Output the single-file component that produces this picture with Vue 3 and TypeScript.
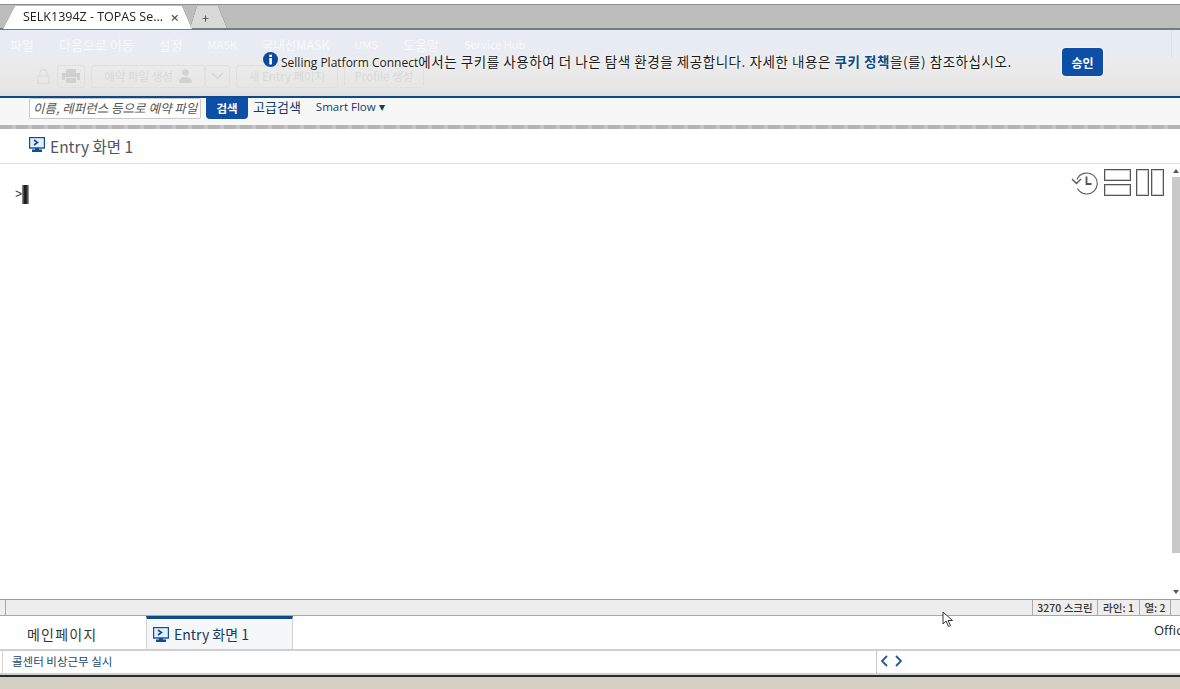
<script setup lang="ts">
interface MenuItem { label: string; kind: string }
const menus: MenuItem[] = [
  { label: '파일', kind: 'ko' },
  { label: '다음으로 이동', kind: 'ko' },
  { label: '설정', kind: 'ko' },
  { label: 'MASK', kind: 'latin' },
  { label: '국내선MASK', kind: 'mixed' },
  { label: 'UMS', kind: 'latin' },
  { label: '도움말', kind: 'ko' },
  { label: 'Service Hub', kind: 'latin' },
]
</script>

<template>
  <div class="page">
    <div class="tabstrip">
      <div class="browser-tabs">
        <div class="browser-tab">
          <span class="browser-title">SELK1394Z - TOPAS Se...</span>
          <span class="browser-close">×</span>
        </div>
        <div class="browser-new">+</div>
      </div>
    </div>

    <div class="header">
      <nav class="menu">
        <span v-for="m in menus" :key="m.label" :class="m.kind">{{ m.label }}</span>
        <span class="menu-end"></span>
      </nav>
      <div class="toolbar">
        <svg class="tool-lock" width="13" height="15" viewBox="0 0 13 15">
          <path d="M3 7V4a3.500 3.500 0 0 1 7 0v3" fill="none" stroke="#dcdcdc" stroke-width="1.300" />
          <rect x="1" y="7" width="11" height="7.500" fill="none" stroke="#dcdcdc" stroke-width="1.300" />
        </svg>
        <span class="tool-box tool-print">
          <svg width="18" height="14" viewBox="0 0 18 14">
            <path d="M4 0h10v4H4zM0 4h18v7h-3V8H3v3H0zM4 9h10v5H4z" fill="#d0d0d0" />
          </svg>
        </span>
        <span class="tool-box tool-pnr">예약 파일 생성
          <svg width="13" height="14" viewBox="0 0 13 14"><circle cx="6.500" cy="3.500" r="3.200" fill="#d2d2d2" /><path d="M0 14c0-5 3-6 6.500-6s6.500 1 6.500 6z" fill="#d2d2d2" /></svg>
        </span>
        <span class="tool-box tool-arrow">
          <svg width="13" height="8" viewBox="0 0 13 8"><path d="M1 1l5.500 5.500L12 1" fill="none" stroke="#d6d6d6" stroke-width="1.500" /></svg>
        </span>
        <span class="tool-box tool-entry">새 Entry 페이지</span>
        <span class="tool-box tool-profile">Profile 생성</span>
      </div>
      <div class="cookie">
        <svg class="cookie-icon" width="15" height="15" viewBox="0 0 15 15">
          <circle cx="7.500" cy="7.500" r="7.500" fill="#0a4a9c" />
          <rect x="6.300" y="6" width="2.600" height="6.500" fill="#fff" />
          <rect x="6.300" y="2.600" width="2.600" height="2.400" fill="#fff" />
        </svg>
        <span class="cookie-text"><span class="cookie-brand">Selling Platform Connect</span>에서는 쿠키를 사용하여 더 나은 탐색 환경을 제공합니다. 자세한 내용은 <b class="cookie-link">쿠키 정책</b>을(를) 참조하십시오.</span>
        <button class="approve" type="button">승인</button>
      </div>
    </div>

    <div class="search">
      <div class="search-input">이름, 레퍼런스 등으로 예약 파일</div>
      <button class="search-btn" type="button">검색</button>
      <span class="advanced">고급검색</span>
      <span class="smart">Smart Flow ▾</span>
    </div>
    <div class="divider"></div>

    <div class="entry-head">
      <svg width="16" height="15" viewBox="0 0 16 15">
        <rect x="0.500" y="0.500" width="15" height="10.500" fill="#e4eef8" stroke="#0f4f98" stroke-width="1.400" />
        <path d="M5 3l3.500 2.500L5 8" fill="none" stroke="#0f4f98" stroke-width="1.600" />
        <path d="M6 11h4v1.500h3V15H3v-2.500h3z" fill="#0f4f98" />
      </svg>
      <span class="entry-title">Entry 화면 1</span>
    </div>

    <div class="terminal">
      <div class="screen">
        <div class="prompt"><span>&gt;</span><i class="cursor"></i></div>
        <div class="screen-tools">
          <svg width="28" height="26" viewBox="0 0 28 26" fill="none" stroke="#555" stroke-width="1.100">
            <path d="M6 9.500A10.500 10.500 0 1 1 6.500 18.500" />
            <path d="M1 9l4.500 4.500L10 9" stroke-width="1.400" />
            <path d="M15.500 6.500V14h5" stroke-width="1.800" />
          </svg>
          <svg width="27" height="27" viewBox="0 0 27 27" fill="none">
            <rect x="0.500" y="0.500" width="26" height="11" stroke="#555" />
            <rect x="1.500" y="1.500" width="24" height="9" stroke="#ccc" />
            <rect x="0.500" y="15.500" width="26" height="11" stroke="#555" />
            <rect x="1.500" y="16.500" width="24" height="9" stroke="#ccc" />
          </svg>
          <svg width="28" height="27" viewBox="0 0 28 27" fill="none">
            <rect x="0.500" y="0.500" width="12" height="26" stroke="#555" />
            <rect x="1.500" y="1.500" width="10" height="24" stroke="#ccc" />
            <rect x="15.500" y="0.500" width="12" height="26" stroke="#555" />
            <rect x="16.500" y="1.500" width="10" height="24" stroke="#ccc" />
          </svg>
        </div>
      </div>
      <div class="scrollbar">
        <span class="scroll-up"></span>
        <span class="scroll-thumb"></span>
        <span class="scroll-down"></span>
      </div>
    </div>

    <div class="status">
      <span class="status-grip"></span>
      <span class="status-fill"></span>
      <span class="status-cell cell-screen">3270 스크린</span>
      <span class="status-cell cell-line">라인: 1</span>
      <span class="status-cell cell-col">열: 2</span>
      <span class="status-end"></span>
      <svg class="pointer" width="12" height="17" viewBox="0 0 12 17">
        <path d="M1 1v12l3-3 2.500 5.500 2-1L6 9.500h4.500z" fill="#fff" stroke="#333" stroke-width="1" />
      </svg>
    </div>

    <div class="bottom-tabs">
      <div class="main-tab">메인페이지</div>
      <div class="entry-tab">
        <svg width="16" height="15" viewBox="0 0 16 15">
          <rect x="0.500" y="0.500" width="15" height="10.500" fill="#e4eef8" stroke="#0f4f98" stroke-width="1.400" />
          <path d="M5 3l3.500 2.500L5 8" fill="none" stroke="#0f4f98" stroke-width="1.600" />
          <path d="M6 11h4v1.500h3V15H3v-2.500h3z" fill="#0f4f98" />
        </svg>
        <span>Entry 화면 1</span>
      </div>
      <div class="office">Office</div>
    </div>

    <div class="ticker">
      <div class="ticker-text">콜센터 비상근무 실시</div>
      <div class="ticker-nav">
        <svg width="21" height="12" viewBox="0 0 21 12" fill="none" stroke="#1f5a8c" stroke-width="1.800">
          <path d="M6 1L1 6l5 5" />
          <path d="M15 1l5 5-5 5" />
        </svg>
      </div>
    </div>
    <div class="desk"></div>
  </div>
</template>

<style>
html, body { margin: 0; background: #fff; overflow: hidden; }
</style>

<style scoped>
.page {
  width: 1180px;
  height: 689px;
  display: flex;
  flex-direction: column;
  overflow: hidden;
  position: relative;
  font-family: "Noto Sans CJK KR", "Noto Sans", sans-serif;
  background: #fff;
  color: #222;
}
.tabstrip {
  margin-top: 4px;
  height: 26px;
  flex: none;
  box-sizing: border-box;
  display: flex;
  align-items: flex-end;
  padding-left: 3px;
  background: #bdbdbd;
  border-top: 1px solid #8d8d8d;
  border-bottom: 2px solid #7b7b7b;
}
.browser-tabs {
  display: flex;
  align-items: flex-end;
  filter: drop-shadow(0 0 0.600px #333);
}
.browser-tab {
  width: 189px;
  height: 23px;
  margin-bottom: -1px;
  box-sizing: border-box;
  display: flex;
  align-items: center;
  justify-content: space-between;
  padding: 0 13px 2px 20px;
  background: #fff;
  clip-path: polygon(0 100%, 12px 0, 179px 0, 100% 100%);
  font-family: "Open Sans", sans-serif;
  font-size: 12.500px;
  color: #222;
  white-space: nowrap;
}
.browser-close { font-size: 15px; font-weight: 600; color: #555; }
.browser-new {
  width: 37px;
  height: 22px;
  margin-left: -2px;
  box-sizing: border-box;
  display: flex;
  align-items: center;
  justify-content: center;
  padding-right: 6px;
  background: #d9d9d9;
  clip-path: polygon(0 100%, 7px 0, 28px 0, 100% 100%);
  font-size: 12px;
  color: #444;
}
.header {
  position: relative;
  flex: none;
  height: 68px;
}
.menu {
  height: 28px;
  box-sizing: border-box;
  display: flex;
  align-items: center;
  padding: 0 0 0 10px;
  gap: 25px;
  background: linear-gradient(#e7ebf4, #e9ecf2);
  color: #f7f9fc;
  white-space: nowrap;
}
.ko { font-size: 13px; }
.latin { font-size: 11px; }
.mixed { font-size: 12.500px; }
.menu-end {
  margin-left: auto;
  width: 8px;
  height: 100%;
  border-left: 1px solid #dfe2e8;
}
.toolbar {
  height: 40px;
  box-sizing: border-box;
  display: flex;
  align-items: center;
  padding: 0 0 2px 37px;
  background: linear-gradient(#ececec, #e6e6e6 85%, #dedede);
  border-bottom: 2px solid #0d4a8a;
  font-size: 11.500px;
  line-height: 14px;
  color: #d8d8d8;
  white-space: nowrap;
}
.tool-lock { margin-right: 7px; }
.tool-box {
  height: 23px;
  box-sizing: border-box;
  display: flex;
  align-items: center;
  justify-content: center;
  gap: 6px;
  border: 1px solid #e0e0e0;
  border-radius: 3px;
}
.tool-print { width: 28px; margin-right: 6px; }
.tool-pnr { width: 114px; }
.tool-arrow { width: 25px; margin-right: 6px; }
.tool-entry { width: 102px; margin-right: 6px; }
.tool-profile { width: 80px; }
.cookie {
  position: absolute;
  left: 262px;
  top: 17px;
  display: flex;
  align-items: center;
  height: 30px;
  font-size: 13.500px;
  line-height: 14px;
  letter-spacing: 0.550px;
  color: #1a1a1a;
  white-space: nowrap;
}
.cookie-icon { margin: -5px 3px 0 1px; }
.cookie-text { width: 764px; text-shadow: 0 0 3px #fff; }
.cookie-brand { font-family: "Open Sans", sans-serif; font-size: 12px; letter-spacing: 0; }
.cookie-link { color: #0a4a86; }
.approve {
  width: 41px;
  height: 28px;
  margin-left: 17px;
  padding: 0;
  border: 0;
  border-radius: 4px;
  background: #0d4ea6;
  color: #fff;
  font: 700 12px "Noto Sans CJK KR", sans-serif;
  box-shadow: 0 0 3px #fff;
}
.search {
  height: 27px;
  flex: none;
  box-sizing: border-box;
  display: flex;
  align-items: flex-start;
  padding: 0 0 0 29px;
  background: #f7f7f7;
  white-space: nowrap;
}
.search-input {
  width: 172px;
  height: 21px;
  box-sizing: border-box;
  overflow: hidden;
  padding: 0 0 0 3px;
  background: #fff;
  border: 1px solid #c9c9c9;
  border-radius: 2px;
  font-size: 12.500px;
  font-style: italic;
  line-height: 18px;
  color: #555;
}
.search-btn {
  width: 42px;
  height: 22px;
  margin: -1px 0 0 5px;
  padding: 0;
  border: 0;
  border-radius: 0 0 4px 4px;
  background: #0d4ea6;
  color: #fff;
  font: 700 11.500px "Noto Sans CJK KR", sans-serif;
}
.advanced { margin-left: 5px; font-size: 13px; line-height: 18px; color: #123c68; }
.smart { margin-left: 15px; font-family: "Open Sans", sans-serif; font-size: 11.500px; line-height: 18px; color: #123c68; }
.divider {
  height: 4px;
  flex: none;
  background: repeating-linear-gradient(90deg, #b4b4b4 0 12px, #c6c6c6 12px 16px);
}
.entry-head {
  height: 35px;
  flex: none;
  box-sizing: border-box;
  display: flex;
  align-items: center;
  gap: 5px;
  padding: 0 0 0 29px;
  border-bottom: 1px solid #dedede;
}
.entry-head svg { margin-top: -4px; }
.entry-title { font-size: 15.500px; color: #4e5560; }
.terminal {
  flex: 1;
  display: flex;
  min-height: 0;
}
.screen {
  position: relative;
  flex: 1;
}
.prompt {
  display: flex;
  align-items: center;
  padding: 21px 0 0 15px;
  font-family: "Liberation Mono", monospace;
  font-size: 12px;
  color: #333;
}
.prompt span { width: 7px; }
.cursor {
  display: block;
  width: 7px;
  height: 19px;
  background: linear-gradient(90deg, #999, #111 40%, #333 70%, #aaa);
}
.screen-tools {
  position: absolute;
  top: 5px;
  right: 8px;
  display: flex;
  align-items: center;
  gap: 5px;
}
.scrollbar {
  width: 8px;
  flex: none;
  display: flex;
  flex-direction: column;
  background: #fff;
}
.scroll-up, .scroll-down {
  height: 13px;
  flex: none;
  position: relative;
}
.scroll-up::after, .scroll-down::after {
  content: "";
  position: absolute;
  left: 1px;
  width: 0;
  height: 0;
  border-left: 3px solid transparent;
  border-right: 3px solid transparent;
}
.scroll-up::after { top: 5px; border-bottom: 4px solid #555; }
.scroll-down::after { top: 4px; border-top: 4px solid #555; }
.scroll-thumb { flex: 1; background: #c9c9c9; margin-bottom: 33px; }
.status {
  position: relative;
  height: 17px;
  flex: none;
  box-sizing: border-box;
  display: flex;
  align-items: stretch;
  background: #ededed;
  border-top: 1px solid #9c9c9c;
  border-bottom: 1px solid #a8a8a8;
  font-size: 10.500px;
  font-weight: 500;
  color: #333;
}
.status-grip { width: 5px; border-right: 1px solid #aaa; }
.status-fill { flex: 1; }
.status-cell {
  display: flex;
  align-items: center;
  justify-content: center;
  box-sizing: border-box;
  border-left: 1px solid #aaa;
  white-space: nowrap;
}
.cell-screen { width: 65px; }
.cell-line { width: 42px; }
.cell-col { width: 31px; }
.status-end { width: 9px; border-left: 1px solid #aaa; }
.pointer { position: absolute; left: 942px; top: 11px; z-index: 2; }
.bottom-tabs {
  height: 35px;
  flex: none;
  box-sizing: border-box;
  display: flex;
  align-items: stretch;
  border-bottom: 2px solid #d0d0d0;
  white-space: nowrap;
}
.main-tab {
  width: 146px;
  box-sizing: border-box;
  padding: 8px 0 0 27px;
  font-size: 14px;
  letter-spacing: 1.200px;
  color: #333;
}
.entry-tab {
  width: 147px;
  box-sizing: border-box;
  display: flex;
  align-items: center;
  gap: 5px;
  padding: 0 0 0 6px;
  background: #f6f7f9;
  border: 1px solid #d2d2d2;
  border-top: 3px solid #0d4a8a;
  border-bottom: 0;
  font-size: 14px;
  color: #123c68;
}
.office {
  margin-left: auto;
  width: 26px;
  overflow: hidden;
  padding-top: 5px;
  font-family: "Open Sans", sans-serif;
  font-size: 13px;
  color: #222;
}
.ticker {
  height: 24px;
  flex: none;
  box-sizing: border-box;
  display: flex;
  border-bottom: 2px solid #d0d0d0;
}
.ticker-text {
  width: 875px;
  box-sizing: border-box;
  padding: 2px 0 0 9px;
  border-left: 1px solid #d4d4d4;
  border-right: 1px solid #c6c6c6;
  margin-left: 2px;
  font-size: 11.500px;
  line-height: 17px;
  color: #1d4a6e;
}
.ticker-nav {
  display: flex;
  align-items: center;
  padding: 0 0 2px 4px;
}
.desk {
  height: 14px;
  flex: none;
  box-sizing: border-box;
  background: #d4d0c4;
  border-top: 2px solid #2a2a2a;
}
</style>
